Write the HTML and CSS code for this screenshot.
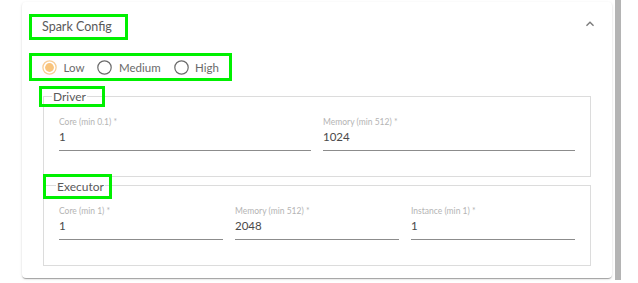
FILE: index.html
```html
<!DOCTYPE html>
<html>
<head>
<meta charset="utf-8">
<link rel="stylesheet" href="styles.css">
</head>
<body>
<div class="page">
  <div class="card">
    <div class="header">
      <span class="mark title">Spark Config</span>
      <svg class="chevron" width="16" height="16" viewBox="0 0 24 24"><path d="M12 8l-6 6 1.41 1.41L12 10.83l4.59 4.58L18 14z"/></svg>
    </div>
    <div class="mark radios">
      <label class="radio">
        <svg width="15" height="15" viewBox="0 0 15 15"><circle cx="7.5" cy="7.5" r="6.6" fill="none" stroke="#f8cd95" stroke-width="1.3"/><circle cx="7.5" cy="7.5" r="4.4" fill="#f9c47c"/></svg>
        <span>Low</span>
      </label>
      <label class="radio">
        <svg width="15" height="15" viewBox="0 0 15 15"><circle cx="7.5" cy="7.5" r="6.7" fill="none" stroke="#6a6a6a" stroke-width="1.2"/></svg>
        <span>Medium</span>
      </label>
      <label class="radio">
        <svg width="15" height="15" viewBox="0 0 15 15"><circle cx="7.5" cy="7.5" r="6.7" fill="none" stroke="#6a6a6a" stroke-width="1.2"/></svg>
        <span>High</span>
      </label>
    </div>
    <div class="group">
      <div class="group-head head-driver"><span class="mark legend"><span class="legend-text">Driver</span></span></div>
      <div class="fields cols-2">
        <div class="field"><div class="label">Core (min 0.1) *</div><div class="value">1</div></div>
        <div class="field"><div class="label">Memory (min 512) *</div><div class="value">1024</div></div>
      </div>
    </div>
    <div class="group group-exec">
      <div class="group-head head-exec"><span class="mark legend legend-exec"><span class="legend-text">Executor</span></span></div>
      <div class="fields cols-3">
        <div class="field"><div class="label">Core (min 1) *</div><div class="value">1</div></div>
        <div class="field"><div class="label">Memory (min 512) *</div><div class="value">2048</div></div>
        <div class="field"><div class="label">Instance (min 1) *</div><div class="value">1</div></div>
      </div>
    </div>
  </div>
  <div class="scrollbar"></div>
</div>
</body>
</html>
```
FILE: styles.css
```css
* { box-sizing: border-box; }
html, body { margin: 0; padding: 0; background: #fff; }
body { font-family: Lato, "Open Sans", sans-serif; color: #666; }
.page { display: flex; align-items: flex-start; width: 638px; height: 283px; overflow: hidden; }
.card {
  margin: 2px 0 0 22px;
  width: 590px;
  height: 276px;
  background: #fff;
  border-radius: 4px;
  box-shadow: 0 2px 1px -1px rgba(0,0,0,0.2), 0 1px 1px 0 rgba(0,0,0,0.14), 0 1px 3px 0 rgba(0,0,0,0.12);
  padding: 12px 21px 13px 21px;
}
.scrollbar { margin-left: 3px; width: 6px; height: 280px; background: #b4b4b4; }
.mark { border: 3px solid #00f000; }
.header { display: flex; justify-content: space-between; align-items: center; margin-left: -14px; height: 26px; }
.title { display: block; width: 99px; height: 26px; padding-left: 10px; font-size: 12.5px; line-height: 20px; color: #5a5a5a; }
.chevron { fill: #7a7a7a; margin-right: -7px; margin-top: -6px; }
.radios { display: flex; align-items: center; width: 203px; height: 28px; margin: 13px 0 0 -14px; padding-left: 10px; gap: 13px; }
.radio { display: flex; align-items: center; gap: 6.5px; font-size: 11.5px; color: #6a6a6a; }
.radio svg { display: block; flex: none; }
.group { border: 1px solid #dcdcdc; margin-top: 15px; padding: 0 15px 25px 15px; }
.group-exec { margin-top: 8px; }
.group-head { display: flex; }
.head-driver { margin: -11px 0 -10px -20px; }
.head-exec { margin: -12px 0 -13px -16px; }
.legend { display: block; width: 66px; height: 21px; padding-left: 10px; font-size: 12px; line-height: 15px; }
.legend-exec { width: 69px; height: 25px; padding-top: 2px; }
.legend-text { background: #fff; padding: 0 1px; color: #5a5a5a; }
.fields { display: grid; gap: 12px; padding-top: 20px; }
.cols-2 { grid-template-columns: 1fr 1fr; }
.cols-3 { grid-template-columns: 1fr 1fr 1fr; }
.label { font-size: 8.5px; line-height: 10px; height: 10px; color: #b4b4b4; white-space: nowrap; }
.value { margin-top: 2px; font-size: 11.5px; line-height: 16px; padding-bottom: 5px; border-bottom: 1px solid #8c8c8c; color: #4a4a4a; }
```
